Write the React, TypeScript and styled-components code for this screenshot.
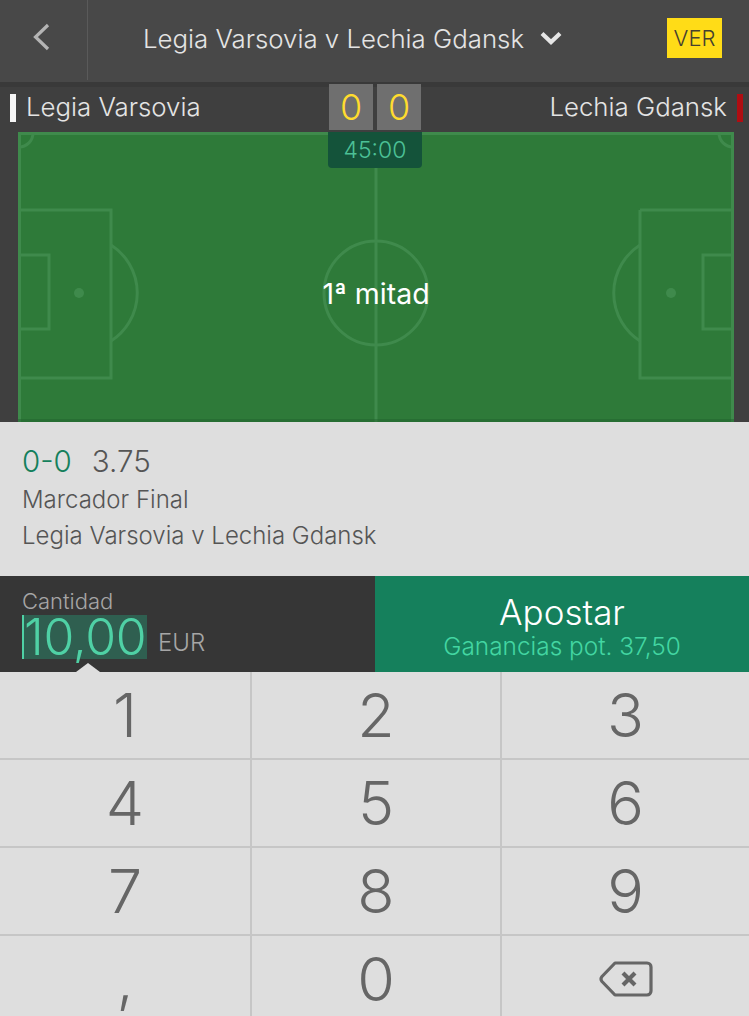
import styled, { createGlobalStyle } from "styled-components";

const GlobalStyle = createGlobalStyle`
  html, body {
    margin: 0;
    padding: 0;
    background: #dedede;
    overflow: hidden;
  }
  body {
    font-family: Inter, "Liberation Sans", sans-serif;
    font-weight: 300;
  }
`;

const KEYS = ["1", "2", "3", "4", "5", "6", "7", "8", "9", ",", "0"];

export default function App() {
  return (
    <Screen>
      <GlobalStyle />
      <Header>
        <BackButton aria-label="Volver">
          <svg width="18" height="28" viewBox="0 0 18 28" fill="none">
            <path d="M16 2L3.5 14L16 26" stroke="#b4b4b4" strokeWidth="3.2" />
          </svg>
        </BackButton>
        <MatchTitle>
          Legia Varsovia v Lechia Gdansk
          <svg width="24" height="16" viewBox="0 0 24 16" fill="none">
            <path d="M3 3.5L12 12L21 3.5" stroke="#e6e6e6" strokeWidth="4.2" />
          </svg>
        </MatchTitle>
        <WatchBadge>VER</WatchBadge>
      </Header>

      <Scoreboard>
        <TeamRow>
          <Team>
            <TeamMark $color="#f5f5f5" />
            Legia Varsovia
          </Team>
          <Scores>
            <ScoreBox>0</ScoreBox>
            <ScoreBox>0</ScoreBox>
          </Scores>
          <Team>
            Lechia Gdansk
            <TeamMark $color="#b00d12" />
          </Team>
        </TeamRow>
        <PitchWrap>
          <Pitch />
          <Clock>45:00</Clock>
          <Period>1ª mitad</Period>
        </PitchWrap>
      </Scoreboard>

      <BetInfo>
        <BetLine>
          <BetScore>0-0</BetScore>
          <BetOdds>3.75</BetOdds>
        </BetLine>
        <BetDetail>Marcador Final</BetDetail>
        <BetDetail>Legia Varsovia v Lechia Gdansk</BetDetail>
      </BetInfo>

      <StakeRow>
        <StakeBox>
          <StakeLabel>Cantidad</StakeLabel>
          <StakeValueRow>
            <StakeValue>10,00</StakeValue>
            <Currency>EUR</Currency>
          </StakeValueRow>
          <KeypadPointer />
        </StakeBox>
        <PlaceBet>
          <PlaceBetTitle>Apostar</PlaceBetTitle>
          <PlaceBetReturn>Ganancias pot. 37,50</PlaceBetReturn>
        </PlaceBet>
      </StakeRow>

      <Keypad>
        {KEYS.map((key) => (
          <Key key={key}>{key}</Key>
        ))}
        <Key aria-label="Borrar">
          <svg width="56" height="38" viewBox="0 0 56 38" fill="none">
            <path
              d="M17 3H49a4 4 0 0 1 4 4V31a4 4 0 0 1-4 4H17L4 21.5a4 4 0 0 1 0-5Z"
              stroke="#666"
              strokeWidth="3.2"
              strokeLinejoin="round"
            />
            <path d="M25 13L37 25M37 13L25 25" stroke="#666" strokeWidth="4.2" />
          </svg>
        </Key>
      </Keypad>
    </Screen>
  );
}

function Pitch() {
  const line = "#3f8a4c";
  return (
    <PitchSvg viewBox="0 0 716 290" fill="none" stroke={line} strokeWidth="3">
      <rect x="1.5" y="1.5" width="713" height="300" />
      <path d="M358 0V290" />
      <circle cx="358" cy="161" r="52" />
      <path d="M1 78H93V246H1M1 123H31V197H1" />
      <path d="M622 78H715M622 78V246H715M715 123H685V197H715" />
      <path d="M93 113A57 57 0 0 1 93 209" />
      <path d="M622 113A57 57 0 0 0 622 209" />
      <path d="M1 15A14 14 0 0 0 15 1M701 1A14 14 0 0 0 715 15" />
      <circle cx="61" cy="161" r="5" fill={line} stroke="none" />
      <circle cx="653" cy="161" r="5" fill={line} stroke="none" />
      <rect x="0" y="287" width="716" height="3" fill="#1f5f2c" fillOpacity="0.45" stroke="none" />
    </PitchSvg>
  );
}

const Screen = styled.div`
  width: 749px;
  height: 1016px;
  overflow: hidden;
  display: flex;
  flex-direction: column;
`;

const Header = styled.header`
  height: 82px;
  flex: none;
  display: flex;
  align-items: flex-start;
  background: #484848;
`;

const BackButton = styled.div`
  width: 88px;
  height: 80px;
  flex: none;
  box-sizing: border-box;
  padding: 23px 0 0 32px;
  border-right: 1px solid #5a5a5a;
`;

const MatchTitle = styled.div`
  width: 530px;
  height: 76px;
  flex: none;
  display: flex;
  align-items: center;
  justify-content: center;
  gap: 15px;
  font-size: 25.8px;
  color: #e4e4e4;
`;

const WatchBadge = styled.div`
  width: 55px;
  height: 40px;
  margin: 18px 0 0 49px;
  flex: none;
  display: flex;
  align-items: center;
  justify-content: center;
  background: #ffdc17;
  color: #454030;
  font-size: 22px;
`;

const Scoreboard = styled.section`
  height: 340px;
  flex: none;
  box-sizing: border-box;
  background: #3f3f3f;
  border-top: 5px solid #393939;
  display: flex;
  flex-direction: column;
`;

const TeamRow = styled.div`
  height: 45px;
  flex: none;
  display: flex;
  align-items: flex-start;
  justify-content: space-between;
  padding: 7px 6px 0 10px;
  box-sizing: border-box;
  position: relative;
`;

const Team = styled.div`
  display: flex;
  align-items: flex-start;
  gap: 10px;
  height: 28px;
  font-size: 25.8px;
  line-height: 25px;
  color: #e4e4e4;
`;

const TeamMark = styled.span<{ $color: string }>`
  width: 6px;
  height: 28px;
  background: ${(p) => p.$color};
`;

const Scores = styled.div`
  position: absolute;
  left: 329px;
  top: -3px;
  display: flex;
  gap: 4px;
`;

const ScoreBox = styled.div`
  width: 44px;
  height: 46px;
  display: flex;
  align-items: center;
  justify-content: center;
  background: #6f6f6f;
  color: #ffdc2e;
  font-size: 36px;
`;

const PitchWrap = styled.div`
  position: relative;
  margin-left: 18px;
  width: 716px;
  height: 290px;
`;

const PitchSvg = styled.svg`
  display: block;
  width: 716px;
  height: 290px;
  background: #2e7a39;
`;

const Clock = styled.div`
  position: absolute;
  left: 310px;
  top: 0;
  width: 94px;
  height: 36px;
  display: flex;
  align-items: center;
  justify-content: center;
  border-radius: 0 0 4px 4px;
  background: #14533a;
  color: #4cc096;
  font-size: 23px;
`;

const Period = styled.div`
  position: absolute;
  left: 0;
  right: 0;
  top: 144px;
  text-align: center;
  color: #ffffff;
  font-size: 28.5px;
  font-weight: 400;
  line-height: 36px;
`;

const BetInfo = styled.section`
  height: 154px;
  flex: none;
  box-sizing: border-box;
  padding: 19px 22px 0;
  background: #dedede;
  display: flex;
  flex-direction: column;
`;

const BetLine = styled.div`
  display: flex;
  gap: 20px;
  height: 41px;
  align-items: flex-start;
  font-size: 29.5px;
  line-height: 41px;
`;

const BetScore = styled.span`
  color: #15805c;
`;

const BetOdds = styled.span`
  color: #555;
`;

const BetDetail = styled.div`
  height: 36px;
  line-height: 36px;
  font-size: 24px;
  color: #555;
`;

const StakeRow = styled.section`
  height: 96px;
  flex: none;
  display: flex;
`;

const StakeBox = styled.div`
  width: 375px;
  flex: none;
  box-sizing: border-box;
  padding: 13px 0 0 22px;
  background: #363636;
  position: relative;
`;

const StakeLabel = styled.div`
  height: 26px;
  line-height: 24px;
  font-size: 22px;
  color: #a6a6a6;
`;

const StakeValueRow = styled.div`
  display: flex;
  align-items: flex-end;
  gap: 11px;
`;

const StakeValue = styled.div`
  height: 44px;
  width: 125px;
  box-sizing: border-box;
  border-left: 2px solid #4fd1a5;
  background: #2f5f50;
  color: #4fd1a5;
  font-size: 50px;
  line-height: 44px;
  letter-spacing: -0.3px;
`;

const Currency = styled.div`
  font-size: 24px;
  line-height: 32px;
  color: #a6a6a6;
`;

const KeypadPointer = styled.span`
  position: absolute;
  left: 76px;
  bottom: 0;
  border-left: 12px solid transparent;
  border-right: 12px solid transparent;
  border-bottom: 9px solid #dedede;
`;

const PlaceBet = styled.div`
  flex: 1;
  display: flex;
  flex-direction: column;
  align-items: center;
  padding-top: 16px;
  background: #15805c;
`;

const PlaceBetTitle = styled.div`
  color: #fff;
  font-size: 35px;
  line-height: 40px;
`;

const PlaceBetReturn = styled.div`
  color: #43d6a2;
  font-size: 24.4px;
  line-height: 28px;
`;

const Keypad = styled.section`
  flex: 1;
  display: grid;
  grid-template-columns: 252px 250px 247px;
  grid-auto-rows: 88px;
  background: #dedede;
`;

const Key = styled.div`
  box-sizing: border-box;
  display: flex;
  align-items: center;
  justify-content: center;
  font-size: 61px;
  color: #666;
  border-right: 2px solid #c6c6c6;
  border-bottom: 2px solid #c6c6c6;

  &:nth-child(3n) {
    border-right: none;
  }
`;
